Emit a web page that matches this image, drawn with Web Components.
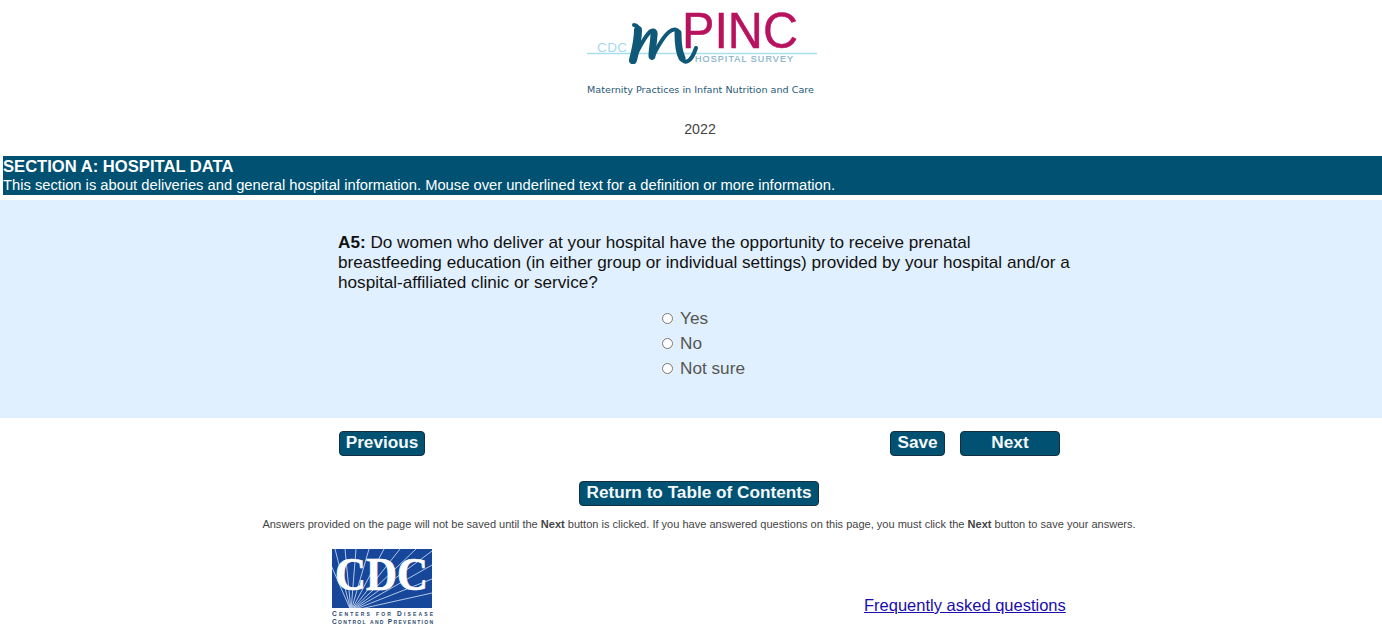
<!DOCTYPE html>
<html lang="en">
<head>
<meta charset="utf-8">
<title>mPINC Hospital Survey</title>
<style>
    html, body { margin: 0; padding: 0; background: #fff; }
    body { font-family: "Liberation Sans", Arial, sans-serif; color: #333; }
</style>
</head>
<body>
<survey-header year="2022"></survey-header>
<section-banner heading="SECTION A: HOSPITAL DATA">This section is about deliveries and general hospital information. Mouse over underlined text for a definition or more information.</section-banner>
<question-panel>
    <span slot="question"><b>A5:</b> Do women who deliver at your hospital have the opportunity to receive prenatal breastfeeding education (in either group or individual settings) provided by your hospital and/or a hospital-affiliated clinic or service?</span>
    <radio-option name="a5">Yes</radio-option>
    <radio-option name="a5">No</radio-option>
    <radio-option name="a5">Not sure</radio-option>
</question-panel>
<survey-nav></survey-nav>
<survey-footer></survey-footer>

<script>
class SurveyHeader extends HTMLElement {
    constructor() {
        super();
        this.attachShadow({ mode: 'open' });
        this.shadowRoot.innerHTML = `
            <style>
                :host { display: block; height: 156px; padding-left: 18px; box-sizing: border-box; }
                .wrap { display: flex; flex-direction: column; align-items: center; }
                svg { display: block; }
                .year { font-size: 14.2px; line-height: 16px; color: #444; margin-top: 23px; }
            </style>
            <div class="wrap">
                <svg width="240" height="98" viewBox="580 0 240 98" role="img" aria-label="CDC mPINC Hospital Survey">
                    <line x1="587" y1="53.5" x2="817" y2="53.5" stroke="#a9e0ee" stroke-width="1.3"/>
                    <text x="597" y="52" font-family="Liberation Sans" font-size="13.5" fill="#a5d9ee" textLength="30">CDC</text>
                    <g fill="none" stroke="#0f5878" stroke-linecap="round" stroke-linejoin="round">
                        <path stroke-width="4" d="M634 25C637 25 639 28 639 32C639 42 635 53 632 62C638 50 645 35 651 31C655 29 656 33 655 38C654 45 652 51 652 58C657 48 664 36 669 32C674 28 679 29 679 35C679 42 679 48 680 53C681 60 684 63 688 61C692 59 694 54 696 48"/>
                        <path stroke-width="8" d="M638 30C638 41 635 52 633 60"/>
                        <path stroke-width="7" d="M654 33C654 41 652 49 652 56"/>
                        <path stroke-width="7" d="M678 33C678 43 679 52 682 58"/>
                    </g>
                    <text x="682" y="48" font-family="Liberation Sans" font-size="50" fill="#b8125f" stroke="#b8125f" stroke-width="0.5" textLength="116" lengthAdjust="spacingAndGlyphs">PINC</text>
                    <text x="695" y="62" font-family="Liberation Sans" font-size="9" fill="#86b3c6" stroke="#86b3c6" stroke-width="0.2" textLength="98">HOSPITAL SURVEY</text>
                    <text x="587" y="93" font-family="DejaVu Sans" font-size="9.5" fill="#1f5a78" textLength="227" lengthAdjust="spacingAndGlyphs">Maternity Practices in Infant Nutrition and Care</text>
                </svg>
                <div class="year">${this.getAttribute('year')}</div>
            </div>
        `
    }
}

class SectionBanner extends HTMLElement {
    constructor() {
        super();
        this.attachShadow({ mode: 'open' });
        this.shadowRoot.innerHTML = `
            <style>
                :host { display: block; margin-left: 3px; height: 39px; box-sizing: border-box; padding-top: 2px; background: #005172; color: #fff; }
                h2 { margin: 0; font-size: 16.6px; line-height: 17px; font-weight: bold; }
                p { margin: 2px 0 0; font-size: 14.72px; line-height: 17px; }
            </style>
            <h2>${this.getAttribute('heading')}</h2>
            <p><slot></slot></p>
        `
    }
}

class QuestionPanel extends HTMLElement {
    constructor() {
        super();
        this.attachShadow({ mode: 'open' });
        this.shadowRoot.innerHTML = `
            <style>
                :host { display: block; margin-top: 5px; height: 218px; box-sizing: border-box; padding: 32px 0 0 338px; background: #e1f0fe; }
                .question { width: 738px; font-size: 17.15px; line-height: 20px; color: #111; }
                .options { display: flex; flex-direction: column; margin: 14px 0 0 324px; }
            </style>
            <div class="question"><slot name="question"></slot></div>
            <div class="options"><slot></slot></div>
        `
    }
}

class RadioOption extends HTMLElement {
    constructor() {
        super();
        this.attachShadow({ mode: 'open' });
        this.shadowRoot.innerHTML = `
            <style>
                :host { display: block; height: 25px; }
                label { display: flex; align-items: center; gap: 7px; height: 25px; font-size: 17.2px; color: #555; }
                input { margin: 0; width: 11px; height: 11px; }
            </style>
            <label><input type="radio" name="${this.getAttribute('name')}"><slot></slot></label>
        `
    }
}

class NavButton extends HTMLElement {
    constructor() {
        super();
        this.attachShadow({ mode: 'open' });
        this.shadowRoot.innerHTML = `
            <style>
                :host { display: inline-block; }
                button {
                    display: block; box-sizing: border-box; height: 25px; padding: 0 0 2px;
                    width: var(--btn-width, auto); white-space: nowrap;
                    font: bold 17.2px "Liberation Sans", Arial, sans-serif;
                    color: #f4f8fa; background: #005172;
                    border: 1px solid #12303f; border-radius: 4px;
                }
            </style>
            <button type="button"><slot></slot></button>
        `
    }
}

class SurveyNav extends HTMLElement {
    constructor() {
        super();
        this.attachShadow({ mode: 'open' });
        this.shadowRoot.innerHTML = `
            <style>
                :host { display: block; padding-top: 13px; }
                .row { display: flex; align-items: center; padding-left: 339px; width: 721px; }
                .spacer { flex: 1; }
                .save { margin-right: 15px; }
                .prev { --btn-width: 86px; }
                .sv { --btn-width: 55px; }
                .next { --btn-width: 100px; }
                .toc { display: flex; justify-content: center; padding: 25px 0 0 16px; --btn-width: 240px; }
                .note { margin: 12px 0 0; padding-left: 16px; text-align: center; font-size: 11.04px; line-height: 13px; color: #444; }
            </style>
            <div class="row">
                <nav-button class="prev">Previous</nav-button>
                <span class="spacer"></span>
                <nav-button class="sv save">Save</nav-button>
                <nav-button class="next">Next</nav-button>
            </div>
            <div class="toc"><nav-button>Return to Table of Contents</nav-button></div>
            <p class="note">Answers provided on the page will not be saved until the <b>Next</b> button is clicked. If you have answered questions on this page, you must click the <b>Next</b> button to save your answers.</p>
        `
    }
}

class CdcLogo extends HTMLElement {
    constructor() {
        super();
        this.attachShadow({ mode: 'open' });
        // rays fan out from the bottom left of the blue box
        let rays = '';
        [[-8, 0], [3, 0], [13, 0], [24, 0], [37, 0], [52, 0], [68, 0], [84, 0], [100, 2], [100, 16], [100, 30], [100, 44]].forEach(p => {
            rays += `<line x1="19" y1="62" x2="${p[0]}" y2="${p[1]}"/>`;
        });
        this.shadowRoot.innerHTML = `
            <style>
                :host { display: block; width: 105px; height: 78px; }
                svg { display: block; }
            </style>
            <svg width="105" height="78" viewBox="0 0 105 78" role="img" aria-label="CDC">
                <svg x="0" y="0" width="100" height="59" viewBox="0 0 100 59">
                    <rect width="100" height="59" fill="#17479a"/>
                    <g stroke="#c3d5ee" stroke-width="0.9">${rays}</g>
                </svg>
                <text x="3" y="41" font-family="Liberation Serif" font-weight="bold" font-size="46" fill="#fff" stroke="#fff" stroke-width="0.7" textLength="93" lengthAdjust="spacingAndGlyphs">CDC</text>
                <text x="0" y="67" font-family="Liberation Sans" font-weight="bold" font-size="6.6" font-variant="small-caps" fill="#2c4a70" textLength="101">Centers for Disease</text>
                <text x="0" y="75" font-family="Liberation Sans" font-weight="bold" font-size="6.6" font-variant="small-caps" fill="#2c4a70" textLength="101">Control and Prevention</text>
            </svg>
        `
    }
}

class SurveyFooter extends HTMLElement {
    constructor() {
        super();
        this.attachShadow({ mode: 'open' });
        this.shadowRoot.innerHTML = `
            <style>
                :host { display: block; margin-top: 18px; }
                .row { display: flex; align-items: flex-start; padding-left: 332px; }
                a { margin: 47px 0 0 427px; font-size: 16.5px; line-height: 19px; color: #1a0dab; }
            </style>
            <div class="row">
                <cdc-logo></cdc-logo>
                <a href="#faq">Frequently asked questions</a>
            </div>
        `
    }
}

customElements.define('survey-header', SurveyHeader);
customElements.define('section-banner', SectionBanner);
customElements.define('question-panel', QuestionPanel);
customElements.define('radio-option', RadioOption);
customElements.define('nav-button', NavButton);
customElements.define('survey-nav', SurveyNav);
customElements.define('cdc-logo', CdcLogo);
customElements.define('survey-footer', SurveyFooter);
</script>
</body>
</html>
